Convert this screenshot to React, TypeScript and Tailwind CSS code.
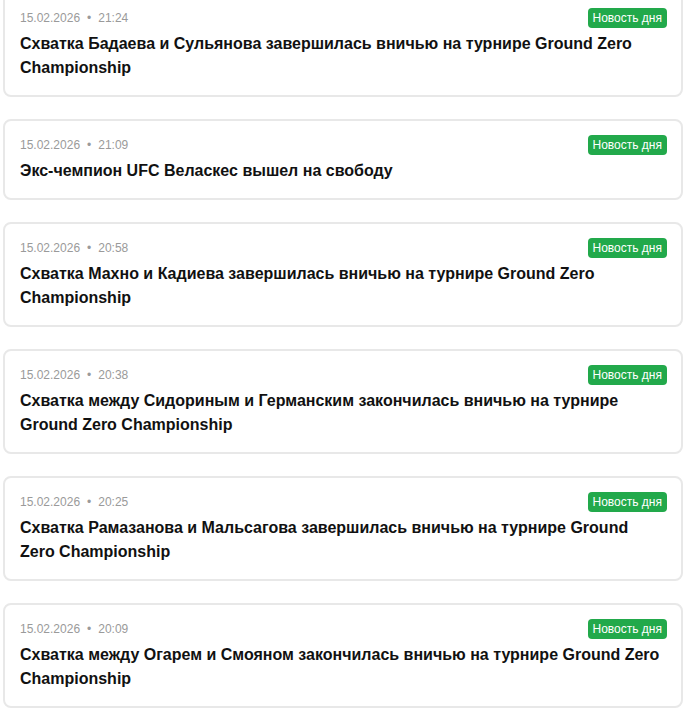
const news = [
  { date: "15.02.2026", time: "21:24", title: "Схватка Бадаева и Сульянова завершилась вничью на турнире Ground Zero Championship" },
  { date: "15.02.2026", time: "21:09", title: "Экс-чемпион UFC Веласкес вышел на свободу" },
  { date: "15.02.2026", time: "20:58", title: "Схватка Махно и Кадиева завершилась вничью на турнире Ground Zero Championship" },
  { date: "15.02.2026", time: "20:38", title: "Схватка между Сидориным и Германским закончилась вничью на турнире Ground Zero Championship" },
  { date: "15.02.2026", time: "20:25", title: "Схватка Рамазанова и Мальсагова завершилась вничью на турнире Ground Zero Championship" },
  { date: "15.02.2026", time: "20:09", title: "Схватка между Огарем и Смояном закончилась вничью на турнире Ground Zero Championship" },
];

function NewsCard({ date, time, title }: { date: string; time: string; title: string }) {
  return (
    <div className="border-2 border-[#e8e8e8] rounded-lg bg-white pl-[15px] pr-[14px] pt-[14px] pb-[15px]">
      <div className="flex items-center justify-between h-5">
        <div className="text-xs text-[#9a9a9a]">
          {date}
          <span className="mx-[7px]">•</span>
          {time}
        </div>
        <span className="bg-[#22a94b] text-white text-xs rounded px-[5px] h-5 leading-5">
          Новость дня
        </span>
      </div>
      <div className="mt-1 text-base leading-6 font-bold text-[#111]">{title}</div>
    </div>
  );
}

export default function App() {
  return (
    <div className="bg-white font-['Liberation_Sans',Arial,sans-serif] overflow-hidden h-[722px]">
      <div className="ml-[3px] w-[680px] -mt-[8px] flex flex-col gap-[22px]">
        {news.map((n, i) => (
          <NewsCard key={i} {...n} />
        ))}
      </div>
    </div>
  );
}
